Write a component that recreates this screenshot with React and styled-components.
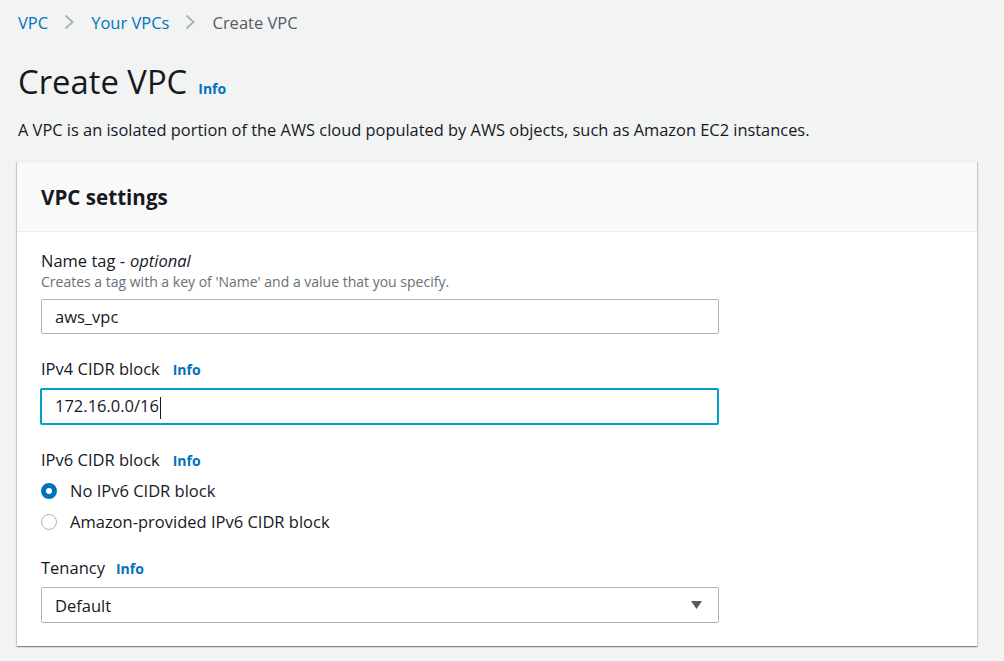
import React from "react";
import styled, { createGlobalStyle } from "styled-components";

const GlobalStyle = createGlobalStyle`
  html, body {
    margin: 0;
    padding: 0;
    background: #f2f3f3;
    font-family: "Open Sans", "Noto Sans", sans-serif;
    color: #16191f;
  }
  * { box-sizing: border-box; }
`;

const Page = styled.div`
  width: 1004px;
  height: 661px;
  overflow: hidden;
  padding: 10px 27px 0 18px;
`;

const Crumbs = styled.nav`
  display: flex;
  align-items: center;
  height: 24px;
  font-size: 16.5px;
`;

const Crumb = styled.a`
  color: ${(p) => (p.$current ? "#545b64" : "#0073bb")};
  text-decoration: none;
`;

const Chevron = styled.span`
  display: inline-flex;
  margin: 0 16px 0 15px;
  color: #aab7b8;
`;

const TitleRow = styled.div`
  display: flex;
  align-items: baseline;
  margin-top: 28px;
`;

const Title = styled.h1`
  margin: 0;
  font-size: 32.8px;
  font-weight: 400;
  line-height: 40px;
`;

const Info = styled.a`
  color: #0073bb;
  font-size: 14px;
  font-weight: 700;
  margin-left: ${(p) => p.$gap || 13}px;
  text-decoration: none;
`;

const Lead = styled.p`
  margin: 17px 0 0;
  font-size: 16.4px;
  line-height: 22px;
`;

const Card = styled.section`
  margin-top: 20px;
  margin-left: -1px;
  background: #fff;
  border-top: 1px solid #eaeded;
  box-shadow: 0 1px 1px 0 rgba(0, 28, 36, 0.3), 1px 1px 1px 0 rgba(0, 28, 36, 0.15),
    -1px 1px 1px 0 rgba(0, 28, 36, 0.15);
`;

const CardHeader = styled.header`
  background: #fafafa;
  border-bottom: 1px solid #eaeded;
  height: 70px;
  padding: 0 24px;
  display: flex;
  align-items: center;
`;

const CardTitle = styled.h2`
  margin: 0;
  font-size: 20.6px;
  font-weight: 700;
`;

const CardBody = styled.div`
  padding: 18px 24px 23px;
  display: flex;
  flex-direction: column;
  gap: 24px;
`;

const Field = styled.div`
  display: flex;
  flex-direction: column;
`;

const Label = styled.label`
  display: flex;
  align-items: baseline;
  font-size: 16.5px;
  line-height: 22px;

  em {
    margin-left: 5px;
  }
`;

const Hint = styled.div`
  font-size: 14px;
  line-height: 20px;
  color: #687078;
`;

const Input = styled.div`
  width: ${(p) => (p.$focused ? 679 : 678)}px;
  height: ${(p) => (p.$focused ? 37 : 35)}px;
  margin-top: 7px;
  margin-left: ${(p) => (p.$focused ? -1 : 0)}px;
  border: ${(p) => (p.$focused ? "2px solid #00a1c9" : "1px solid #aab7b8")};
  border-radius: 2px;
  padding-left: 13px;
  display: flex;
  align-items: center;
  font-size: 16.5px;
  background: #fff;
`;

const Select = styled.div`
  width: 678px;
  height: 36px;
  margin-top: 7px;
  border: 1px solid #aab7b8;
  border-radius: 2px;
  padding: 0 16px 0 13px;
  display: flex;
  align-items: center;
  justify-content: space-between;
  font-size: 16.5px;
`;

const Caret = styled.span`
  display: inline-block;
  width: 1px;
  height: 22px;
  background: #16191f;
  vertical-align: middle;
  margin-left: 1px;
`;

const Radios = styled.div`
  display: flex;
  flex-direction: column;
  gap: 9px;
  margin-top: 8px;
`;

const RadioRow = styled.div`
  display: flex;
  align-items: center;
  gap: 13px;
  font-size: 16.5px;
  line-height: 22px;
`;

const RadioDot = styled.span`
  width: 16px;
  height: 16px;
  border-radius: 50%;
  border: ${(p) => (p.$on ? "5px solid #0073bb" : "1px solid #aab7b8")};
  background: #fff;
  flex-shrink: 0;
`;

const ChevronIcon = () => (
  <svg width="12" height="16" viewBox="0 0 12 16">
    <path d="M2.5 1.5l7 6.5-7 6.5" fill="none" stroke="currentColor" strokeWidth="2" />
  </svg>
);

export default function App() {
  return (
    <Page>
      <GlobalStyle />
      <Crumbs>
        <Crumb href="#">VPC</Crumb>
        <Chevron><ChevronIcon /></Chevron>
        <Crumb href="#">Your VPCs</Crumb>
        <Chevron><ChevronIcon /></Chevron>
        <Crumb $current>Create VPC</Crumb>
      </Crumbs>

      <TitleRow>
        <Title>Create VPC</Title>
        <Info href="#" $gap={11}>Info</Info>
      </TitleRow>
      <Lead>
        A VPC is an isolated portion of the AWS cloud populated by AWS objects, such as Amazon EC2 instances.
      </Lead>

      <Card>
        <CardHeader>
          <CardTitle>VPC settings</CardTitle>
        </CardHeader>
        <CardBody>
          <Field>
            <Label>
              Name tag -<em>optional</em>
            </Label>
            <Hint>Creates a tag with a key of 'Name' and a value that you specify.</Hint>
            <Input>aws_vpc</Input>
          </Field>

          <Field>
            <Label>
              IPv4 CIDR block <Info href="#">Info</Info>
            </Label>
            <Input $focused>
              <span>
                172.16.0.0/16<Caret />
              </span>
            </Input>
          </Field>

          <Field>
            <Label>
              IPv6 CIDR block <Info href="#">Info</Info>
            </Label>
            <Radios>
              <RadioRow>
                <RadioDot $on />
                No IPv6 CIDR block
              </RadioRow>
              <RadioRow>
                <RadioDot />
                Amazon-provided IPv6 CIDR block
              </RadioRow>
            </Radios>
          </Field>

          <Field>
            <Label>
              Tenancy <Info href="#" $gap={11}>Info</Info>
            </Label>
            <Select>
              Default
              <svg width="11" height="8" viewBox="0 0 11 8">
                <path d="M0 0h11L5.5 8z" fill="#545b64" />
              </svg>
            </Select>
          </Field>
        </CardBody>
      </Card>
    </Page>
  );
}
